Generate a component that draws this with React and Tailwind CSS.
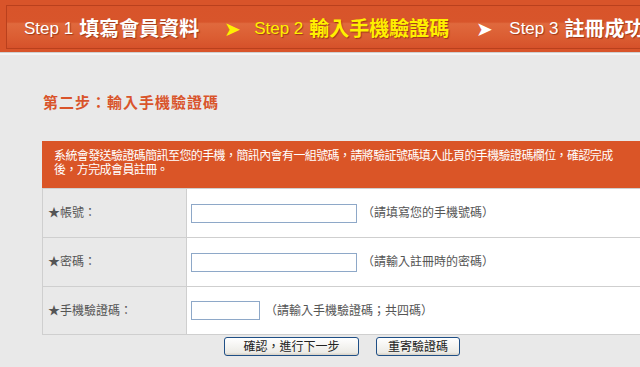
import React from "react";

const cjk = { fontFamily: '"Liberation Sans", "Noto Sans CJK TC", sans-serif' };

function Row({ label, inputW, hint, last }) {
  return (
    <div className={`flex h-[49px] border-t border-[#cfcfcf] ${last ? "border-b" : ""}`}>
      <div className="w-[144px] shrink-0 bg-[#e9e9e9] border-r border-[#cfcfcf] flex items-center pl-[5px] text-[12px] text-[#555]">
        {label}
      </div>
      <div className="flex-1 bg-white flex items-center pl-[4px]">
        <input
          className={`${inputW} h-[19px] border border-[#8ea8c8] bg-white outline-none`}
          type="text"
        />
        <span className="ml-[5px] text-[12px] text-[#555]">{hint}</span>
      </div>
    </div>
  );
}

const shadow = "[text-shadow:1px_1px_1px_rgba(120,30,0,0.6)]";

export default function App() {
  return (
    <div className="w-[640px] h-[367px] overflow-hidden bg-[#e9e9e9]" style={cjk}>
      {/* header */}
      <div className="h-[52px] bg-[#d8542a] pt-[5px] pl-[6px]">
        <div className="h-[44px] pt-[3px] border-t border-l border-b border-[#b9401d] bg-[linear-gradient(to_bottom,#d8542a_0%,#d8552b_38%,#e0693d_42%,#db5d32_75%,#d6512a_100%)] flex items-center pl-[17px] whitespace-nowrap">
          <span className={`text-white text-[17px] ${shadow}`}>Step 1 </span>
          <span className={`ml-[6px] text-white text-[20px] font-bold ${shadow}`}>填寫會員資料</span>
          <span className="ml-[25px] text-[#fff000] text-[20px]">➤</span>
          <span className={`ml-[13px] text-[#fff000] text-[17px] ${shadow}`}>Step 2 </span>
          <span className={`ml-[6px] text-[#fff000] text-[20px] font-bold ${shadow}`}>輸入手機驗證碼</span>
          <span className="ml-[27px] text-white text-[20px]">➤</span>
          <span className={`ml-[16px] text-white text-[17px] ${shadow}`}>Step 3 </span>
          <span className={`ml-[6px] text-white text-[20px] font-bold ${shadow}`}>註冊成功</span>
        </div>
      </div>
      <div className="h-[3px] bg-[#f4f4f4] border-t border-[#cfcfcf]" />

      {/* content */}
      <div className="pl-[42px]">
        <div className="w-[700px]">
          <div className="pt-[37px] h-[86px] pl-[1px] text-[15px] font-bold text-[#d9542b] tracking-[1px]">
            第二步：輸入手機驗證碼
          </div>
          <div className="bg-[#da5527] h-[47px] w-[598px] pl-[12px] pt-[8px]">
            <div className="whitespace-nowrap text-[12px] leading-[14px] tracking-[-0.6px] text-white">
              系統會發送驗證碼簡訊至您的手機，簡訊內會有一組號碼，請將驗証號碼填入此頁的手機驗證碼欄位，確認完成
              <br />
              後，方完成會員註冊。
            </div>
          </div>
          <div className="border-l border-[#cfcfcf]">
            <Row label="★帳號：" inputW="w-[166px]" hint="（請填寫您的手機號碼）" />
            <Row label="★密碼：" inputW="w-[166px]" hint="（請輸入註冊時的密碼）" />
            <Row label="★手機驗證碼：" inputW="w-[69px]" hint="（請輸入手機驗證碼；共四碼）" last />
          </div>
          <div className="flex pl-[182px] pt-[2px] gap-[17px]">
            <button className="w-[135px] h-[19px] rounded-[3px] border border-[#1f4f86] bg-[linear-gradient(to_bottom,#ffffff,#ecebe6_85%,#d6d0c5)] text-[12px] leading-[16px] text-[#222]">
              確認，進行下一步
            </button>
            <button className="w-[84px] h-[19px] rounded-[3px] border border-[#1f4f86] bg-[linear-gradient(to_bottom,#ffffff,#ecebe6_85%,#d6d0c5)] text-[12px] leading-[16px] text-[#222]">
              重寄驗證碼
            </button>
          </div>
        </div>
      </div>
    </div>
  );
}
